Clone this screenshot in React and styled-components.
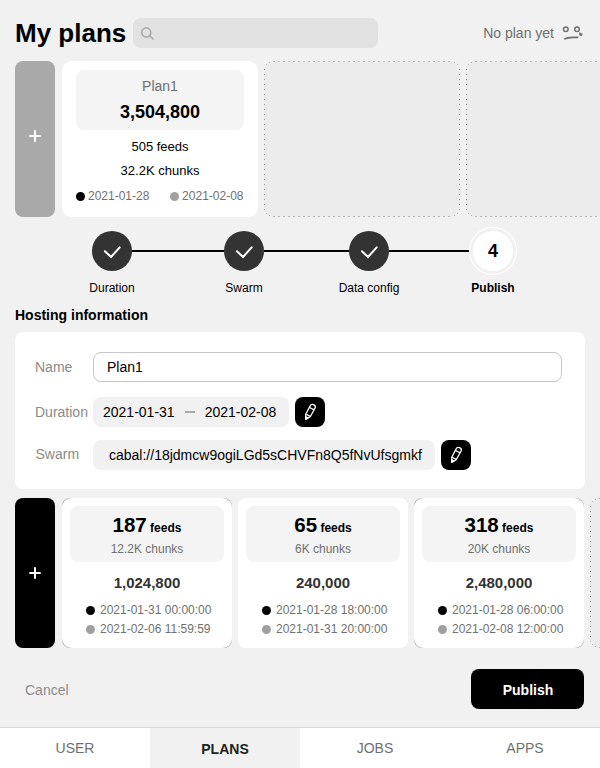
import React from 'react';
import styled, { createGlobalStyle, css } from 'styled-components';

const GlobalStyle = createGlobalStyle`
  * { box-sizing: border-box; }
  body { margin: 0; background: #f1f1f1; overflow: hidden; }
  button, input { font: inherit; border: 0; padding: 0; margin: 0; }
`;

const Page = styled.div`
  display: flex;
  flex-direction: column;
  width: 600px;
  height: 768px;
  overflow: hidden;
  background: #f1f1f1;
  color: #000;
  font-family: 'Liberation Sans', Arial, sans-serif;
  font-size: 14px;
`;

const Header = styled.header`
  display: flex;
  align-items: center;
  flex: none;
  height: 30px;
  margin: 18px 16px 13px 15px;
`;

const Title = styled.h1`
  width: 118px;
  margin: 0;
  font-size: 26px;
  line-height: 30px;
  white-space: nowrap;
`;

const SearchBar = styled.div`
  display: flex;
  align-items: center;
  width: 245px;
  height: 30px;
  padding-left: 7px;
  border-radius: 8px;
  background: #e1e1e1;
`;

const PlanStatus = styled.div`
  display: flex;
  align-items: center;
  gap: 8px;
  margin-left: auto;
  color: #707070;
  line-height: 30px;
`;

const CardRow = styled.section`
  display: flex;
  flex: none;
  gap: 6px;
  height: ${(p) => p.$height}px;
  padding-left: 15px;
  overflow: hidden;
`;

const AddButton = styled.button`
  display: flex;
  align-items: center;
  justify-content: center;
  flex: none;
  width: 40px;
  margin-right: 1px;
  padding: ${(p) => (p.$muted ? '0 1px 6px 0' : 0)};
  border-radius: 8px;
  background: ${(p) => (p.$muted ? '#a9a9a9' : '#000')};
`;

const PlanCard = styled.article`
  display: flex;
  flex-direction: column;
  flex: none;
  width: 196px;
  padding: 9px 14px 0;
  border-radius: 10px;
  background: #fff;
  text-align: center;
`;

const PlanSummary = styled.div`
  height: 60px;
  padding-top: 6px;
  margin-bottom: 5px;
  border-radius: 8px;
  background: #f4f4f4;
`;

const PlanName = styled.div`
  color: #707070;
  line-height: 20px;
  margin-bottom: 2px;
`;

const PlanTotal = styled.div`
  font-size: 18px;
  font-weight: bold;
  line-height: 29px;
`;

const PlanStat = styled.div`
  font-size: 13px;
  line-height: 24px;
`;

const PlanDates = styled.div`
  display: flex;
  justify-content: space-between;
  width: 167.5px;
  margin-top: 1px;
`;

const DateLabel = styled.div`
  display: flex;
  align-items: center;
  gap: ${(p) => (p.$wide ? 5 : 3)}px;
  color: #707070;
  font-size: 12px;
  line-height: ${(p) => (p.$wide ? 19 : 25)}px;
  white-space: nowrap;
  &::before {
    content: '';
    width: 9px;
    height: 9px;
    border-radius: 50%;
    background: ${(p) => (p.$end ? '#a0a0a0' : '#000')};
  }
`;

const dash = 'transparent 0 1px, #b9b9b9 1px 3px, transparent 3px 5px';
const dot = 'transparent 0 2px, #929292 2px 3px, transparent 3px 5px';
const cornerDot = (pos) => `linear-gradient(#b5b5b5, #b5b5b5) ${pos} / 1px 1px no-repeat`;

const EmptySlot = styled.div`
  flex: none;
  width: ${(p) => p.$width}px;
  border-radius: 9px;
  background:
    ${cornerDot('left 2px top 3px')},
    ${cornerDot('left 5px top 1px')},
    ${cornerDot('right 2px top 3px')},
    ${cornerDot('right 5px top 1px')},
    ${cornerDot('left 2px bottom 3px')},
    ${cornerDot('left 5px bottom 1px')},
    ${cornerDot('right 2px bottom 3px')},
    ${cornerDot('right 5px bottom 1px')},
    repeating-linear-gradient(90deg, ${dash}) 8px 0 / calc(100% - 16px) 1px no-repeat,
    repeating-linear-gradient(90deg, ${dash}) 8px 100% / calc(100% - 16px) 1px no-repeat,
    repeating-linear-gradient(${dot}) 0 6px / 1px calc(100% - 12px) no-repeat,
    repeating-linear-gradient(${dot}) 100% 6px / 1px calc(100% - 12px) no-repeat,
    #ececec;
`;

const Stepper = styled.nav`
  display: flex;
  flex: none;
  height: 66px;
  margin: 14px 0 0 72px;
`;

const Step = styled.div`
  display: flex;
  flex-direction: column;
  align-items: center;
  flex: none;
  width: 80px;
  font-size: 12px;
  font-weight: ${(p) => (p.$current ? 'bold' : 'normal')};
  line-height: 14px;
`;

const StepCircle = styled.div`
  display: flex;
  align-items: center;
  justify-content: center;
  width: 40px;
  height: 40px;
  margin-bottom: 10px;
  border-radius: 50%;
  background: #333;
  font-size: 18px;
  ${(p) =>
    p.$current &&
    css`
      background: #fff;
      box-shadow: 0 0 0 3px #f1f1f1, 0 0 0 4px #fff;
    `}
`;

const StepLine = styled.div`
  flex: none;
  width: ${(p) => p.$width}px;
  height: 2px;
  margin: 19px ${(p) => (p.$last ? -16 : -20)}px 0 -20px;
  background: #000;
`;

const SectionTitle = styled.h2`
  flex: none;
  margin: 9px 15px 0;
  font-size: 14px;
  line-height: 18px;
`;

const InfoPanel = styled.section`
  display: flex;
  flex-direction: column;
  flex: none;
  height: 157px;
  margin: 8px 15px 9px;
  padding: 20px 20px 0;
  border-radius: 8px;
  background: #fff;
`;

const Field = styled.div`
  display: flex;
  align-items: center;
  height: 30px;
  margin-bottom: ${(p) => p.$space || 0}px;
`;

const FieldLabel = styled.label`
  flex: none;
  width: 58px;
  color: #8a8a8a;
  padding: 0 0 ${(p) => (p.$raised ? 2 : 0)}px ${(p) => (p.$raised ? 0.5 : 0)}px;
`;

const NameInput = styled.input`
  width: 469px;
  height: 30px;
  padding: 0 13px;
  border: 1px solid #c6c6c6;
  border-radius: 8px;
  background: #fff;
  color: #000;
  outline: none;
`;

const FieldValue = styled.div`
  display: flex;
  align-items: center;
  width: ${(p) => p.$width}px;
  height: 30px;
  padding-left: ${(p) => p.$inset}px;
  margin-right: 6px;
  border-radius: 8px;
  background: #f1f1f1;
  white-space: nowrap;
`;

const RangeDash = styled.span`
  width: 10px;
  height: 2px;
  margin: 0 10px;
  background: #a9a9a9;
`;

const EditButton = styled.button`
  display: flex;
  align-items: center;
  justify-content: center;
  width: 30px;
  height: 30px;
  border-radius: 8px;
  background: #000;
`;

const FeedCard = styled.article`
  flex: none;
  width: 170px;
  border-radius: 8px;
  background: ${(p) => (p.$outlined ? '#a9a9a9' : '#fff')};
`;

const FeedBody = styled.div`
  height: 100%;
  padding: 8px 8px 0;
  border-radius: 9.5px;
  background: #fff;
  text-align: center;
`;

const FeedSummary = styled.div`
  height: 56px;
  padding-top: 6px;
  border-radius: 8px;
  background: #f4f4f4;
`;

const FeedCount = styled.div`
  height: 26px;
  font-size: 12px;
  font-weight: bold;
  line-height: 26px;
  strong { font-size: 20.5px; }
`;

const ChunkCount = styled.div`
  color: #707070;
  font-size: 12px;
  line-height: 22px;
`;

const FeedTotal = styled.div`
  color: #333;
  font-size: 15px;
  font-weight: bold;
  line-height: 40px;
  margin: 1px 0 -2px;
`;

const FeedDates = styled.div`
  padding-left: 16px;
`;

const Actions = styled.div`
  display: flex;
  align-items: center;
  justify-content: space-between;
  flex: none;
  height: 40px;
  margin: 21px 16px 18px 25px;
`;

const CancelButton = styled.button`
  margin-top: 2px;
  background: none;
  color: #8c8c8c;
`;

const PublishButton = styled.button`
  width: 113px;
  height: 40px;
  padding: 2px 0 0 1px;
  border-radius: 8px;
  background: #000;
  color: #fff;
  font-weight: bold;
`;

const TabBar = styled.nav`
  display: flex;
  flex: none;
  height: 41px;
  border-top: 1px solid #d8d8d8;
  background: #fff;
`;

const Tab = styled.a`
  flex: 1;
  padding-top: ${(p) => (p.$active ? 1 : 0)}px;
  background: ${(p) => (p.$active ? '#f1f1f1' : '#fff')};
  color: ${(p) => (p.$active ? '#222' : '#707070')};
  font-weight: ${(p) => (p.$active ? 'bold' : 'normal')};
  line-height: 40px;
  text-align: center;
`;

const SearchIcon = () => (
  <svg width="15" height="15" viewBox="0 0 15 15" fill="none" stroke="#ababab" strokeWidth="1.6">
    <circle cx="6.3" cy="6.4" r="4.5" />
    <path d="M9.6 9.6 13.6 13.5" />
  </svg>
);

const SadIcon = () => (
  <svg width="22" height="16" viewBox="0 0 22 16" fill="none" stroke="#707070" strokeWidth="1.5">
    <circle cx="3.8" cy="4.2" r="2.3" />
    <circle cx="15" cy="4.2" r="2.3" />
    <path d="M2.3 14.2C5.5 11.8 9 12.4 16.3 12.4" strokeWidth="1.8" />
    <path d="M17.6 7C17 8.6 16.8 10 18 10.6 18.8 11.8 20.3 11.2 20 10.1 21.4 9.4 20.6 8 19 8.2Z" fill="#707070" stroke="none" />
  </svg>
);

const PlusIcon = () => (
  <svg width="12" height="12" viewBox="0 0 12 12" stroke="#fff" strokeWidth="2">
    <path d="M0.3 6H11.7M6 0.3V11.7" />
  </svg>
);

const CheckIcon = () => (
  <svg width="40" height="40" viewBox="0 0 40 40" fill="none" stroke="#fff" strokeWidth="2" strokeLinecap="round">
    <path d="M12.9 20.2 19 26 27.7 16.4" />
  </svg>
);

const PencilIcon = () => (
  <svg width="30" height="30" viewBox="0 0 30 30" fill="none" stroke="#fff" strokeWidth="1.3" strokeLinejoin="round">
    <path d="M10.8 22.3 10.7 17.2 15.3 8.6C16.4 6.2 21.2 7.8 20.2 10.8L15.2 19.7Z" />
    <path d="M11.3 17.2 15 19.4M14.6 10.5 19.2 12.8" />
    <path d="M10.8 22.3 10.7 19.8 13 21.1Z" fill="#fff" />
  </svg>
);

const steps = [
  { label: 'Duration', line: 92 },
  { label: 'Swarm', line: 85 },
  { label: 'Data config', line: 80, last: true },
];

const feeds = [
  { count: 187, chunks: '12.2K', total: '1,024,800', start: '2021-01-31 00:00:00', end: '2021-02-06 11:59:59', outlined: true },
  { count: 65, chunks: '6K', total: '240,000', start: '2021-01-28 18:00:00', end: '2021-01-31 20:00:00' },
  { count: 318, chunks: '20K', total: '2,480,000', start: '2021-01-28 06:00:00', end: '2021-02-08 12:00:00', outlined: true },
];

const tabs = ['USER', 'PLANS', 'JOBS', 'APPS'];

export default function App() {
  return (
    <Page>
      <GlobalStyle />
      <Header>
        <Title>My plans</Title>
        <SearchBar><SearchIcon /></SearchBar>
        <PlanStatus>No plan yet <SadIcon /></PlanStatus>
      </Header>

      <CardRow $height={156}>
        <AddButton $muted aria-label="Add plan"><PlusIcon /></AddButton>
        <PlanCard>
          <PlanSummary>
            <PlanName>Plan1</PlanName>
            <PlanTotal>3,504,800</PlanTotal>
          </PlanSummary>
          <PlanStat>505 feeds</PlanStat>
          <PlanStat>32.2K chunks</PlanStat>
          <PlanDates>
            <DateLabel>2021-01-28</DateLabel>
            <DateLabel $end>2021-02-08</DateLabel>
          </PlanDates>
        </PlanCard>
        <EmptySlot $width={196} />
        <EmptySlot $width={196} />
      </CardRow>

      <Stepper>
        {steps.map((s) => (
          <React.Fragment key={s.label}>
            <Step><StepCircle><CheckIcon /></StepCircle>{s.label}</Step>
            <StepLine $width={s.line} $last={s.last} />
          </React.Fragment>
        ))}
        <Step $current><StepCircle $current>4</StepCircle>Publish</Step>
      </Stepper>

      <SectionTitle>Hosting information</SectionTitle>
      <InfoPanel>
        <Field $space={15}>
          <FieldLabel>Name</FieldLabel>
          <NameInput defaultValue="Plan1" />
        </Field>
        <Field $space={13}>
          <FieldLabel>Duration</FieldLabel>
          <FieldValue $width={196} $inset={10}>2021-01-31<RangeDash />2021-02-08</FieldValue>
          <EditButton aria-label="Edit duration"><PencilIcon /></EditButton>
        </Field>
        <Field>
          <FieldLabel $raised>Swarm</FieldLabel>
          <FieldValue $width={342} $inset={16}>cabal://18jdmcw9ogiLGd5sCHVFn8Q5fNvUfsgmkf</FieldValue>
          <EditButton aria-label="Edit swarm"><PencilIcon /></EditButton>
        </Field>
      </InfoPanel>

      <CardRow $height={150}>
        <AddButton aria-label="Add feeds"><PlusIcon /></AddButton>
        {feeds.map((f) => (
          <FeedCard key={f.count} $outlined={f.outlined}>
            <FeedBody>
              <FeedSummary>
                <FeedCount><strong>{f.count}</strong> feeds</FeedCount>
                <ChunkCount>{f.chunks} chunks</ChunkCount>
              </FeedSummary>
              <FeedTotal>{f.total}</FeedTotal>
              <FeedDates>
                <DateLabel $wide>{f.start}</DateLabel>
                <DateLabel $wide $end>{f.end}</DateLabel>
              </FeedDates>
            </FeedBody>
          </FeedCard>
        ))}
        <EmptySlot $width={170} />
      </CardRow>

      <Actions>
        <CancelButton>Cancel</CancelButton>
        <PublishButton>Publish</PublishButton>
      </Actions>

      <TabBar>
        {tabs.map((t) => <Tab key={t} $active={t === 'PLANS'}>{t}</Tab>)}
      </TabBar>
    </Page>
  );
}
